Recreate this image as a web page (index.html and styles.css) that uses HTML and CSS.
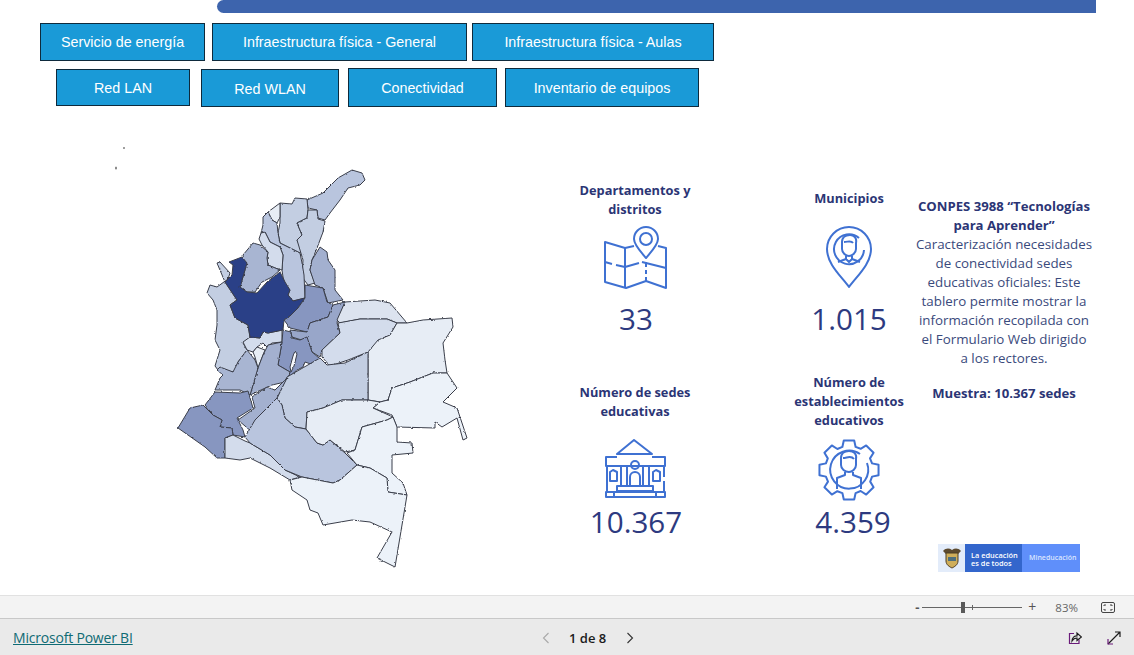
FILE: index.html
```html
<!DOCTYPE html>
<html lang="es">
<head>
<meta charset="utf-8">
<title>Tablero Conectividad</title>
<link rel="stylesheet" href="styles.css">
</head>
<body>
<div class="page">
  <main class="report">
    <div class="topbar"></div>
    <nav class="btn-row row-one">
      <a class="btn w-energia">Servicio de energía</a>
      <a class="btn w-general">Infraestructura física - General</a>
      <a class="btn w-aulas">Infraestructura física - Aulas</a>
    </nav>
    <nav class="btn-row row-two">
      <a class="btn w-lan">Red LAN</a>
      <a class="btn w-wlan">Red WLAN</a>
      <a class="btn w-con">Conectividad</a>
      <a class="btn w-inv">Inventario de equipos</a>
    </nav>
    <section class="content">
      <svg class="map" viewBox="100 140 380 440" aria-label="Mapa de Colombia">
        <defs>
          <filter id="rough" x="-5%" y="-5%" width="110%" height="110%">
            <feTurbulence type="fractalNoise" baseFrequency="0.3" numOctaves="2" seed="4"/>
            <feDisplacementMap in="SourceGraphic" scale="2.2" xChannelSelector="R" yChannelSelector="G"/>
            <feGaussianBlur stdDeviation="0.2"/>
          </filter>
        </defs>
        <g class="depts" filter="url(#rough)">
          <polygon class="t6" points="307,200 323,193 338,178 352,170 362,173 365,180 360,185 348,188 340,200 330,213 325,220 318,218 317,210 308,208"/>
          <polygon class="t7" points="280,203 292,204 295,198 307,199 308,210 307,218 297,223 302,235 297,240 302,250 300,253 290,248 280,243 278,233 280,223"/>
          <polygon class="t7" points="308,210 317,210 318,219 325,221 323,232 317,248 312,260 310,270 315,283 308,285 302,277 303,260 297,240 302,235 297,223 307,218"/>
          <polygon class="t10" points="268,212 280,203 280,217 277,223 272,220"/>
          <polygon class="t6" points="263,217 268,212 272,220 277,223 278,233 280,243 290,248 300,253 302,263 304,275 305,298 293,301 288,295 290,290 285,285 283,277 282,270 283,255 280,247 270,242 265,232 261,233 263,225"/>
          <polygon class="t8" points="261,233 265,232 270,242 280,247 283,255 282,270 275,268 268,265 267,258 268,252 262,245 259,239"/>
          <polygon class="t5" points="243,255 253,243 260,245 268,252 267,258 268,265 280,270 272,277 262,282 255,292 245,292 240,287 245,270"/>
          <polygon class="t7" points="217,263 220,262 230,273 228,279 217,287 210,285 207,293 213,300 217,310 217,325 215,340 220,350 215,366 218,370 235,372 238,362 247,350 243,343 250,337 248,325 235,318 230,305 237,300 225,282"/>
          <polygon class="t8" points="243,342 250,337 260,338 263,332 268,333 282,330 282,342 272,343 267,347 263,343 257,347 253,352 247,350"/>
          <polygon class="t10" points="253,352 257,347 265,350 263,355 258,368 255,357"/>
          <polygon class="t0" points="229,262 242,257 247,263 240,287 247,292 257,293 267,282 280,272 285,282 290,290 288,295 293,301 305,298 298,308 290,316 284,320 283,330 268,333 263,332 260,338 250,337 248,325 235,318 230,305 237,300 225,282 232,275 233,265"/>
          <polygon class="t4" points="320,247 327,252 328,260 335,270 335,290 343,300 328,303 323,288 315,285 310,270 312,260"/>
          <polygon class="t2" points="305,285 323,288 327,302 333,305 328,317 310,323 307,332 290,328 284,320 290,316 298,308 305,298"/>
          <polygon class="t3" points="290,330 307,332 310,323 328,317 333,305 345,302 337,323 340,333 322,350 320,357 312,352 308,342 292,337"/>
          <polygon class="t9" points="345,302 375,300 390,303 407,323 397,323 387,319 360,319 340,323 337,320"/>
          <polygon class="t8" points="338,323 360,319 387,319 397,323 390,335 377,343 368,352 348,360 330,366 322,357 322,350 340,333"/>
          <polygon class="t10" points="407,323 423,320 452,318 453,327 443,343 445,360 447,373 433,373 410,382 392,388 388,400 380,402 368,400 368,352 378,340 390,335 397,323"/>
          <polygon class="t11" points="447,373 457,388 443,402 457,408 467,438 463,440 457,418 442,427 435,422 435,428 397,427 392,415 373,408 380,402 388,400 392,388 410,382 433,373"/>
          <polygon class="t2" points="283,330 291,332 292,338 300,340 307,337 312,352 319,358 319,367 305,362 303,367 297,370 288,378 290,372 278,365 282,342"/>
          <polygon class="t12" points="295,351 297,354 294,366 291,372 290,367 293,356"/>
          <polygon class="t4" points="268,345 282,342 278,365 290,372 288,378 285,382 272,385 250,395 258,368 263,355"/>
          <polygon class="t5" points="238,362 247,350 255,360 258,368 250,395 240,390 233,390 215,390 220,378 223,375 217,370 220,367 233,372"/>
          <polygon class="t7" points="287,377 320,358 327,365 345,363 368,352 368,400 342,400 323,408 307,412 306,429 295,427 285,418 282,405 277,398"/>
          <polygon class="t4" points="287,378 277,398 252,432 238,420 255,408 252,397 267,387 275,390"/>
          <polygon class="t2" points="205,405 215,392 240,393 248,391 253,408 237,418 243,430 245,437 233,435 232,428 220,427 222,420 213,415"/>
          <polygon class="t2" points="178,428 190,408 203,405 213,415 222,420 220,427 232,428 233,435 225,438 225,458 217,458 205,447"/>
          <polygon class="t8" points="225,438 233,435 245,441 250,443 270,455 285,470 300,477 290,480 270,468 250,458 240,460 225,458"/>
          <polygon class="t6" points="245,437 255,420 277,398 282,405 285,418 295,427 306,429 317,443 323,445 330,440 345,453 357,465 340,480 333,483 302,477 285,470 270,455 250,443"/>
          <polygon class="t10" points="307,412 323,408 342,400 368,400 380,402 373,408 393,417 387,420 362,427 355,450 345,452 330,440 323,445 317,443 306,429"/>
          <polygon class="t11" points="347,453 355,450 362,427 387,420 393,417 397,427 397,442 412,443 413,453 392,455 392,473 403,483 407,495 388,492 387,478 370,468 357,465"/>
          <polygon class="t11" points="290,480 302,477 333,483 340,480 357,465 370,468 387,478 388,492 407,495 395,567 377,558 392,532 370,522 352,520 323,525 318,513 310,510 307,500 292,490"/>
        </g>
        <ellipse class="isle" cx="124" cy="148" rx="0.7" ry="1.1"/>
        <ellipse class="isle" cx="116" cy="168" rx="0.7" ry="1.6"/>
      </svg>

      <div class="stats">
        <article class="stat">
          <h2 class="stat-title title-two nudge-down">Departamentos y distritos</h2>
          <svg class="icon icon-map" viewBox="0 0 64 64">
            <circle cx="42" cy="13" r="6"/>
            <path d="M42 32C37 26 30 19 30 13a12 12 0 0 1 24 0C54 19 47 26 42 32Z"/>
            <path d="M30 20 21 22 1 16V56L22 62 42 55 62 62V22L54 20"/>
            <path d="M21 22V62M42 36V41M42 44V48M42 51V55"/>
            <path d="M1 36 8 38M12 39 21 41 35 37M38 36 62 42"/>
          </svg>
          <p class="stat-num gap-large num-left">33</p>
        </article>
        <article class="stat">
          <h2 class="stat-title title-two nudge-up">Municipios</h2>
          <svg class="icon icon-pin" viewBox="0 0 46 62">
            <path d="M23 61C15 50 1 38 1 23a22 22 0 0 1 44 0C45 38 31 50 23 61Z"/>
            <path d="M33 12A15 15 0 1 0 38 24"/>
            <path d="M16 16C16 11 20 9 24 9 28 9 31 12 30 17V23C30 27 26 30 23 30 20 30 16 27 16 23Z"/>
            <path d="M18 16C22 16 25 14 27 17"/>
            <path d="M20 30V33L12 36M26 30V33L34 36M20 33 23 36 26 33"/>
          </svg>
          <p class="stat-num gap-large">1.015</p>
        </article>
        <article class="stat">
          <h2 class="stat-title title-three nudge-down">Número de sedes educativas</h2>
          <svg class="icon icon-building" viewBox="0 0 62 60">
            <path d="M30 1 13 15H48Z"/>
            <path d="M13 18H2V27H61V18H48"/>
            <path d="M3 27V53M60 27V38M60 42V53"/>
            <path d="M17 27H23V47H17ZM39 27H45V47H39Z"/>
            <circle cx="31" cy="26" r="4"/>
            <path d="M26 48V38a5 5 0 0 1 10 0V48"/>
            <path d="M6 42V33L9 31 13 33V42ZM49 42V33L52 31 56 33V42Z"/>
            <path d="M13 47H49V52H13ZM2 53H61V58H2ZM10 53V58M52 53V58"/>
          </svg>
          <p class="stat-num gap-small num-left">10.367</p>
        </article>
        <article class="stat">
          <h2 class="stat-title title-three nudge-down">Número de establecimientos educativos</h2>
          <svg class="icon icon-gear" viewBox="0 0 62 62">
            <polygon points="54.07,24.38 60.54,25.79 60.54,36.21 54.07,37.62 52.2,42.63 55.57,48.2 48.2,55.57 42.63,52 37.62,54.07 36.21,60.54 25.79,60.54 24.38,54.07 19.37,52.2 13.8,55.57 6.43,48.2 10,42.63 7.93,37.62 1.46,36.21 1.46,25.79 7.93,24.38 9.8,19.37 6.43,13.8 13.8,6.43 19.37,10 24.38,7.93 25.79,1.46 36.21,1.46 37.62,7.93 42.63,9.8 48.2,6.43 55.57,13.8 52,19.37"/>
            <path d="M42 15A19 19 0 1 0 49 24"/>
            <path d="M23 19C23 14 27 12 31 12 36 12 39 15 38 20V26C38 30 34 33 31 33 27 33 23 30 23 26Z"/>
            <path d="M25 19C29 19 33 16 36 20"/>
            <path d="M27 33V36L19 39V50M35 33V36L43 39V50"/>
          </svg>
          <p class="stat-num gap-small num-right">4.359</p>
        </article>
      </div>

      <aside class="about">
        <p class="about-text"><strong>CONPES 3988 “Tecnologías<br>para Aprender”</strong><br>Caracterización necesidades<br>de conectividad sedes<br>educativas oficiales: Este<br>tablero permite mostrar la<br>información recopilada con<br>el Formulario Web dirigido<br>a los rectores.</p>
        <p class="about-sample">Muestra: 10.367 sedes</p>
        <div class="logo">
          <span class="logo-crest">
            <svg class="crest" viewBox="0 0 20 22">
              <path class="crest-wing" d="M1 4C4 1 7 1 10 3 13 1 16 1 19 4L16 7H4Z"/>
              <path class="crest-shield" d="M4 6H16V14C16 18 12 20 10 21 8 20 4 18 4 14Z"/>
              <path class="crest-band" d="M6 10H14V14H6Z"/>
            </svg>
          </span>
          <span class="logo-main">La educación<br>es de todos</span>
          <span class="logo-min">Mineducación</span>
        </div>
      </aside>
    </section>
  </main>

  <div class="zoombar">
    <span class="zoom-sign">-</span>
    <span class="slider"><i class="tick"></i><i class="thumb"></i></span>
    <span class="zoom-sign plus">+</span>
    <span class="zoom-pct">83%</span>
    <svg class="fit" viewBox="0 0 14 11">
      <rect x="0.5" y="0.5" width="13" height="10" rx="1.5"/>
      <path d="M3 4V3H5M9 3H11V4M11 7V8H9M5 8H3V7"/>
    </svg>
  </div>

  <footer class="footer">
    <a class="pbi">Microsoft Power BI</a>
    <div class="pager">
      <svg class="chev chev-off" viewBox="0 0 8 12"><path d="M6.5 1 1.5 6 6.5 11"/></svg>
      <span class="page-label">1 de 8</span>
      <svg class="chev" viewBox="0 0 8 12"><path d="M1.5 1 6.5 6 1.5 11"/></svg>
    </div>
    <div class="actions">
      <svg class="act act-share" viewBox="0 0 14 14">
        <path class="act-accent" d="M6 2.5H1.5V12.5H11V8.5"/>
        <path d="M4 10C4 6.5 6.5 4.8 9 4.8V2L13.5 6 9 9.5V7C7 7 5.2 8 4 10Z"/>
      </svg>
      <svg class="act" viewBox="0 0 14 14">
        <path d="M1 13 13 1M8 1H13V6"/>
        <path class="act-accent" d="M1 8V13H6"/>
      </svg>
    </div>
  </footer>
</div>
</body>
</html>
```

FILE: styles.css
```css
* { box-sizing: border-box; }
html, body { margin: 0; padding: 0; background: #fff; }
h2, p { margin: 0; }

.page {
  width: 1134px;
  height: 655px;
  display: flex;
  flex-direction: column;
  overflow: hidden;
  font-family: "Open Sans", "Noto Sans", sans-serif;
}

.report { height: 595px; overflow: hidden; }

.topbar {
  margin-left: 217px;
  width: 879px;
  height: 13px;
  background: #3d64ad;
  border-radius: 7px 0 0 7px;
}

.btn-row { display: flex; }
.row-one { margin: 10px 0 0 40px; height: 38px; align-items: flex-start; }
.row-two { margin: 7px 0 0 56px; height: 39px; align-items: flex-start; }

.btn {
  display: flex;
  align-items: center;
  justify-content: center;
  height: 38px;
  background: #1a9ad7;
  border: 1px solid #0e2a3c;
  color: #fff;
  font: 14.3px "Liberation Sans", Arial, sans-serif;
}
.w-energia { width: 165px; }
.w-general { width: 255px; margin-left: 7px; }
.w-aulas { width: 242px; margin-left: 5px; }
.w-lan { width: 134px; height: 37px; margin-top: 1px; }
.w-wlan { width: 138px; margin-left: 11px; margin-top: 1px; padding-top: 1px; }
.w-con { width: 149px; margin-left: 9px; height: 39px; padding-top: 1px; }
.w-inv { width: 194px; margin-left: 8px; height: 39px; }

.content { display: flex; margin-top: 33px; }

.map { width: 380px; height: 440px; margin-left: 100px; flex: none; }
.depts polygon { stroke: #3a3e4a; stroke-width: 1; stroke-linejoin: round; }
.isle { fill: #444; }
.t0 { fill: #2a3f87; }
.t2 { fill: #8796c0; }
.t3 { fill: #98a6c9; }
.t4 { fill: #a3b0cf; }
.t5 { fill: #a8b5d2; }
.t6 { fill: #b9c5de; }
.t7 { fill: #c3cee2; }
.t8 { fill: #d3dcec; }
.t9 { fill: #dce3ef; }
.t10 { fill: #e7edf5; }
.t11 { fill: #ecf2f9; }
.t12 { fill: #f6f8fc; }

.stats {
  display: grid;
  grid-template-columns: 150px 118px;
  column-gap: 80px;
  row-gap: 33px;
  margin-left: 80px;
  padding-top: 40px;
  align-content: start;
}
.stat { display: flex; flex-direction: column; align-items: center; }
.stat-title {
  display: flex;
  align-items: center;
  justify-content: center;
  text-align: center;
  color: #2b3575;
  font-size: 12.8px;
  font-weight: 700;
  line-height: 19px;
}
.title-two { height: 38px; margin-bottom: 8px; width: 130px; }
.title-three { height: 57px; margin-bottom: 10px; width: 130px; }
.nudge-down { padding-top: 2px; }
.nudge-up { padding-bottom: 2px; }

.icon {
  display: block;
  fill: none;
  stroke: #3f71d2;
  stroke-width: 2;
  stroke-linejoin: round;
  flex: none;
}
.icon-map { width: 64px; height: 64px; margin-bottom: -2px; margin-left: 2px; }
.icon-pin { width: 46px; height: 62px; }
.icon-building { width: 62px; height: 60px; }
.icon-gear { width: 62px; height: 62px; margin-bottom: -2px; }

.stat-num {
  color: #2d3a80;
  font-size: 29.6px;
  line-height: 40px;
  text-align: center;
}
.gap-large { margin-top: 11px; }
.gap-small { margin-top: 3px; }
.num-left { padding-left: 2px; }
.num-right { padding-left: 8px; }

.about {
  width: 190px;
  margin-left: 1px;
  padding-top: 57px;
  flex: none;
  text-align: center;
  color: #3a4a7c;
  font-size: 13.35px;
  line-height: 19px;
}
.about-text strong, .about-sample { color: #2b3575; font-weight: 700; font-size: 13.15px; }
.about-sample { margin-top: 16px; }

.logo {
  display: flex;
  width: 142px;
  height: 28px;
  margin: 141px 0 0 29px;
  text-align: left;
  color: #fff;
}
.logo-crest {
  width: 27px;
  background: #e3ecfa;
  display: flex;
  align-items: center;
  justify-content: center;
}
.crest { width: 20px; height: 22px; }
.crest-wing { fill: #5c4a2e; }
.crest-shield { fill: #cfae5a; stroke: #4b3c25; stroke-width: 1; }
.crest-band { fill: #4f6f7c; }
.logo-main {
  width: 57px;
  background: #3366cc;
  padding: 7px 0 0 6px;
  font-size: 7.4px;
  font-weight: 600;
  line-height: 8px;
  white-space: nowrap;
}
.logo-min {
  width: 58px;
  background: #5f8ffa;
  padding-left: 7px;
  font-size: 7px;
  font-weight: 600;
  line-height: 28px;
  color: #dbe6ff;
  white-space: nowrap;
}

.zoombar {
  height: 24px;
  background: #f3f3f3;
  border-top: 1px solid #e1e1e1;
  border-bottom: 1px solid #c8c8c8;
  display: flex;
  align-items: center;
  justify-content: flex-end;
  color: #555;
  font: 11px "Open Sans", sans-serif;
  padding-right: 19px;
}
.zoom-sign { font-size: 13px; font-weight: 700; line-height: 20px; }
.zoom-sign.plus { font-weight: 400; font-size: 14px; margin-left: 6px; }
.slider {
  position: relative;
  display: block;
  width: 100px;
  height: 1px;
  background: #666;
  margin-left: 3px;
}
.thumb {
  position: absolute;
  left: 39px;
  top: -5px;
  width: 4px;
  height: 11px;
  background: #5a5a5a;
}
.tick {
  position: absolute;
  left: 50px;
  top: -2px;
  width: 1px;
  height: 5px;
  background: #666;
}
.zoom-pct { margin-left: 19px; color: #666; font-size: 11.5px; }
.fit {
  width: 14px;
  height: 11px;
  margin-left: 23px;
  fill: none;
  stroke: #444;
  stroke-width: 1;
}

.footer {
  flex: 1;
  background: #eaeaea;
  display: flex;
  align-items: center;
  padding: 1px 13px 0;
}
.pbi {
  color: #0f6b74;
  font-size: 14px;
  text-decoration: underline;
  width: 120px;
  white-space: nowrap;
  letter-spacing: -0.2px;
}
.pager {
  display: flex;
  align-items: center;
  margin-left: 409px;
}
.page-label {
  font-size: 13px;
  font-weight: 600;
  color: #1b1b1b;
  margin: 0 20px 0 19px;
}
.chev {
  width: 8px;
  height: 12px;
  fill: none;
  stroke: #333;
  stroke-width: 1.1;
}
.chev-off { stroke: #a9a9a9; }
.actions { margin-left: auto; display: flex; gap: 25px; }
.act {
  width: 14px;
  height: 14px;
  fill: none;
  stroke: #1c1c1c;
  stroke-width: 1.2;
}
.act-accent { stroke: #6a1b7a; }
```
